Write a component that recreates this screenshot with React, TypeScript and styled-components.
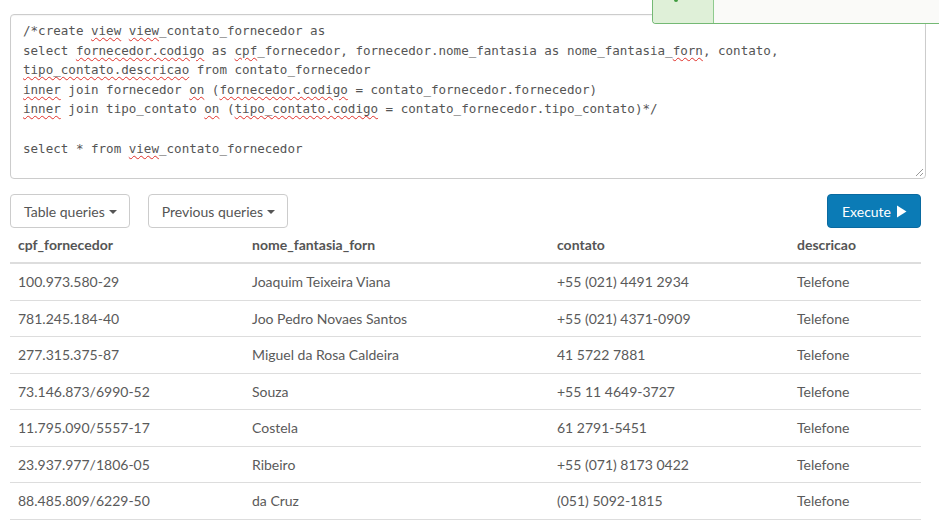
import React from "react";
import styled, { createGlobalStyle } from "styled-components";

const Global = createGlobalStyle`
  html, body { margin: 0; padding: 0; background: #fff; }
  body { font-family: Lato, "Noto Sans", sans-serif; color: #555; }
`;

const Page = styled.div`
  position: relative;
  width: 939px;
  height: 525px;
  overflow: hidden;
  padding: 14px 18px 0 10px;
  box-sizing: border-box;
`;

const Toast = styled.div`
  position: absolute;
  top: -10px;
  left: 652px;
  right: -4px;
  height: 33px;
  display: flex;
  border: 1px solid #74b974;
  border-top: none;
  border-right: none;
  border-bottom-left-radius: 4px;
  overflow: hidden;
  background: #fafaf8;
`;

const ToastIcon = styled.div`
  width: 60px;
  background: #dff0d8;
  border-right: 1px solid #8fcb8f;
  position: relative;
`;

const ToastDot = styled.span`
  position: absolute;
  left: 21px;
  top: 9px;
  width: 4px;
  height: 3px;
  border-radius: 0 0 2px 2px;
  background: #3f9b3f;
`;

const ToastBody = styled.div`
  flex: 1;
`;

const Editor = styled.div`
  position: relative;
  width: 916px;
  height: 165px;
  box-sizing: border-box;
  border: 1px solid #ccc;
  border-radius: 4px;
  padding: 6px 12px;
  font-family: "DejaVu Sans Mono", "Liberation Mono", monospace;
  font-size: 12.56px;
  line-height: 19.6px;
  color: #555;
  white-space: pre;
  box-shadow: inset 0 1px 1px rgba(0, 0, 0, 0.04);
`;

const Spell = styled.span`
  text-decoration: underline wavy #e0302a;
  text-decoration-thickness: 1px;
  text-underline-offset: 2px;
`;

const Grip = styled.svg`
  position: absolute;
  right: 1px;
  bottom: 1px;
`;

const Toolbar = styled.div`
  display: flex;
  align-items: center;
  gap: 18px;
  margin-top: 15px;
  width: 911px;
`;

const DropButton = styled.button`
  display: inline-flex;
  align-items: center;
  gap: 4px;
  height: 34px;
  box-sizing: border-box;
  padding: 0 12px 0 13px;
  border: 1px solid #ccc;
  border-radius: 4px;
  background: #fff;
  font-family: Lato, "Noto Sans", sans-serif;
  font-size: 14px;
  color: #555;
`;

const Caret = styled.span`
  display: inline-block;
  width: 0;
  height: 0;
  margin-top: 2px;
  border-top: 4px solid #555;
  border-left: 4px solid transparent;
  border-right: 4px solid transparent;
`;

const Spacer = styled.div`
  flex: 1;
`;

const ExecuteButton = styled.button`
  display: inline-flex;
  align-items: center;
  gap: 5px;
  height: 34px;
  box-sizing: border-box;
  padding: 0 13px 0 14px;
  border: 1px solid #0a6aa0;
  border-radius: 4px;
  background: #0b7bb6;
  color: #fff;
  font-family: Lato, "Noto Sans", sans-serif;
  font-size: 14px;
`;

const Table = styled.table`
  width: 911px;
  border-collapse: collapse;
  table-layout: fixed;
  font-size: 14px;
`;

const Th = styled.th<{ $w: number }>`
  box-sizing: border-box;
  width: ${(p) => p.$w}px;
  text-align: left;
  font-weight: 700;
  color: #555;
  padding: 7px 8px;
  line-height: 20px;
  border-bottom: 2px solid #ddd;
`;

const Td = styled.td`
  padding: 8px;
  line-height: 19.5px;
  color: #5a5a5a;
  border-bottom: 1px solid #ddd;
  white-space: nowrap;
`;

const columns: [string, number][] = [
  ["cpf_fornecedor", 234],
  ["nome_fantasia_forn", 305],
  ["contato", 240],
  ["descricao", 132],
];

const rows = [
  ["100.973.580-29", "Joaquim Teixeira Viana", "+55 (021) 4491 2934", "Telefone"],
  ["781.245.184-40", "Joo Pedro Novaes Santos", "+55 (021) 4371-0909", "Telefone"],
  ["277.315.375-87", "Miguel da Rosa Caldeira", "41 5722 7881", "Telefone"],
  ["73.146.873/6990-52", "Souza", "+55 11 4649-3727", "Telefone"],
  ["11.795.090/5557-17", "Costela", "61 2791-5451", "Telefone"],
  ["23.937.977/1806-05", "Ribeiro", "+55 (071) 8173 0422", "Telefone"],
  ["88.485.809/6229-50", "da Cruz", "(051) 5092-1815", "Telefone"],
];

export default function App() {
  return (
    <>
      <Global />
      <Page>
        <Editor>
          {"/*create "}<Spell>view</Spell>{" "}<Spell>view</Spell>{"_contato_fornecedor as\n"}
          {"select "}<Spell>fornecedor.codigo</Spell>{" as "}<Spell>cpf</Spell>{"_fornecedor, fornecedor.nome_fantasia as nome_fantasia_"}<Spell>forn</Spell>{", contato,\n"}
          <Spell>tipo_contato.descricao</Spell>{" from contato_fornecedor\n"}
          <Spell>inner</Spell>{" join fornecedor "}<Spell>on</Spell>{" ("}<Spell>fornecedor.codigo</Spell>{" = contato_fornecedor.fornecedor)\n"}
          <Spell>inner</Spell>{" join tipo_contato "}<Spell>on</Spell>{" ("}<Spell>tipo_contato.codigo</Spell>{" = contato_fornecedor.tipo_contato)*/\n"}
          {"\n"}
          {"select * from "}<Spell>view</Spell>{"_contato_fornecedor"}
          <Grip width="10" height="10" viewBox="0 0 10 10">
            <path d="M9 2 L2 9 M9 6 L6 9" stroke="#999" strokeWidth="1" />
          </Grip>
        </Editor>
        <Toolbar>
          <DropButton>
            Table queries <Caret />
          </DropButton>
          <DropButton>
            Previous queries <Caret />
          </DropButton>
          <Spacer />
          <ExecuteButton>
            Execute
            <svg width="11" height="13" viewBox="0 0 11 13">
              <path d="M1 0.5 L10.5 6.5 L1 12.5 Z" fill="#fff" />
            </svg>
          </ExecuteButton>
        </Toolbar>
        <Table>
          <thead>
            <tr>
              {columns.map(([c, w]) => (
                <Th key={c} $w={w}>
                  {c}
                </Th>
              ))}
            </tr>
          </thead>
          <tbody>
            {rows.map((r) => (
              <tr key={r[0]}>
                {r.map((c, i) => (
                  <Td key={i}>{c}</Td>
                ))}
              </tr>
            ))}
          </tbody>
        </Table>
        <Toast>
          <ToastIcon>
            <ToastDot />
          </ToastIcon>
          <ToastBody />
        </Toast>
      </Page>
    </>
  );
}
